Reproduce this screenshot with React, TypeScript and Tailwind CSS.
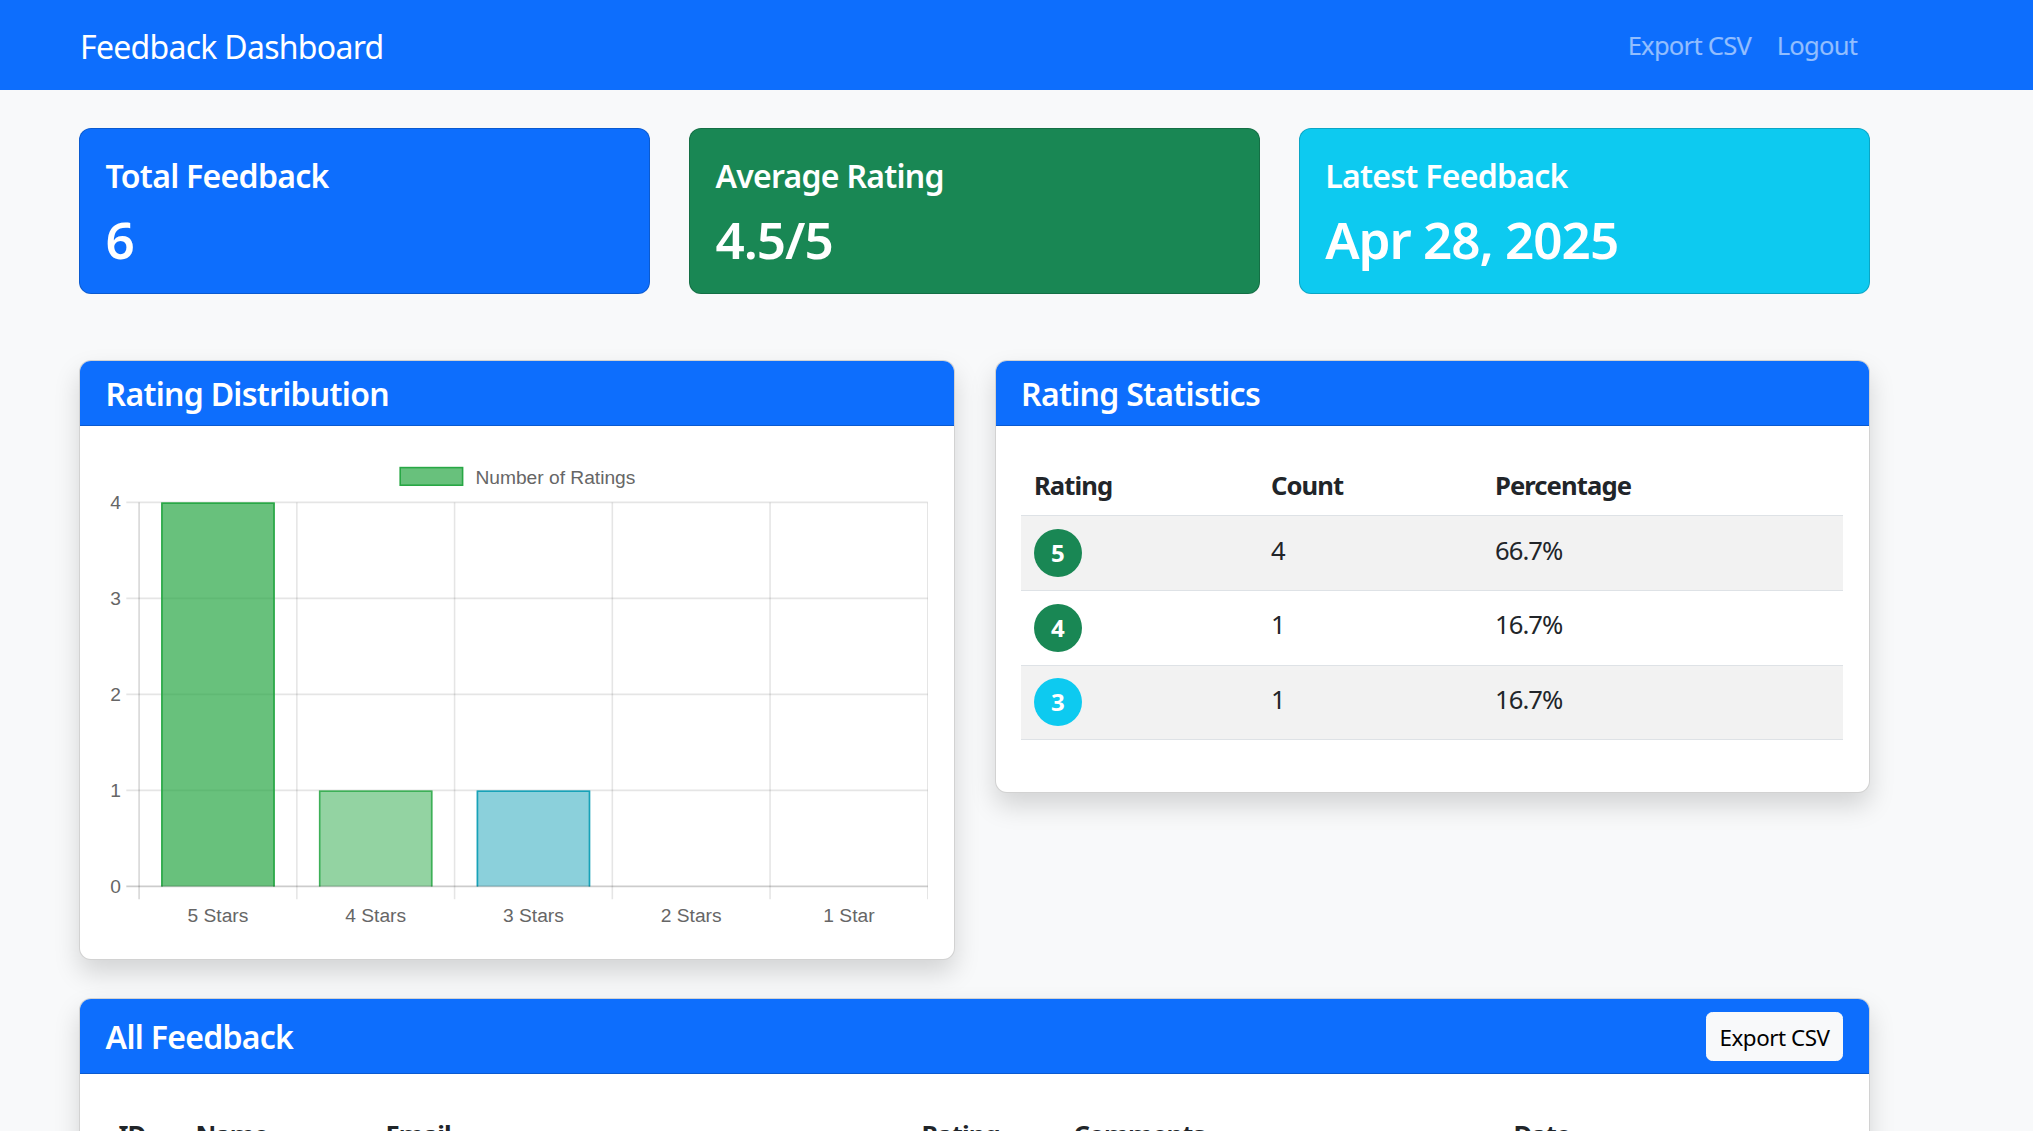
import React from "react";

const FONT = "font-['Noto_Sans','Open_Sans',sans-serif] tracking-[-0.045em]";

function StatCard({ title, value, bg }: { title: string; value: string; bg: string }) {
  return (
    <div className={`rounded-[12px] border border-black/[0.175] ${bg} px-[25.6px] pt-[28px] pb-[23.2px] text-white`}>
      <div className="text-[32px] leading-[38.4px] font-semibold mb-[12.8px]">{title}</div>
      <div className="text-[51.2px] leading-[61.4px] font-semibold tracking-[-0.02em]">{value}</div>
    </div>
  );
}

function CardHeader({ children }: { children: React.ReactNode }) {
  return (
    <div className="bg-[#0d6efd] border-b border-black/[0.175] px-[25.6px] pt-[14px] pb-[11.6px] text-white text-[32px] leading-[38.4px] font-semibold">
      {children}
    </div>
  );
}

const CHART_FONT = "'Liberation Sans', Arial, sans-serif";

function Chart() {
  const x0 = 33.1;
  const right = 821.8;
  const cw = (right - x0) / 5;
  const y = (v: number) => 435.4 - 96 * v;
  const labels = ["5 Stars", "4 Stars", "3 Stars", "2 Stars", "1 Star"];
  const bars = [
    { v: 4, fill: "rgba(40,167,69,0.7)", stroke: "#28a745" },
    { v: 1, fill: "rgba(40,167,69,0.5)", stroke: "rgba(40,167,69,0.8)" },
    { v: 1, fill: "rgba(23,162,184,0.5)", stroke: "#17a2b8" },
  ];
  const bw = cw * 0.72;
  const grid = "rgba(0,0,0,0.1)";
  return (
    <svg width="822" height="482" viewBox="0 0 822 482" className="block tracking-normal">
      <rect x="294.2" y="16.6" width="62.4" height="17.6" fill="rgba(40,167,69,0.7)" stroke="#28a745" strokeWidth="1.6" />
      <text x="369.4" y="26" fontFamily={CHART_FONT} fontSize="19.2" fill="#666" dominantBaseline="central">
        Number of Ratings
      </text>
      {[1, 2, 3, 4].map((v) => (
        <line key={v} x1={x0 - 12.8} x2={right} y1={y(v)} y2={y(v)} stroke={grid} strokeWidth="1.6" />
      ))}
      {[1, 2, 3, 4, 5].map((i) => (
        <line key={i} x1={x0 + cw * i} x2={x0 + cw * i} y1={y(4)} y2={y(0) + 12.8} stroke={grid} strokeWidth="1.6" />
      ))}
      {bars.map((b, i) => {
        const bx = x0 + cw * i + (cw - bw) / 2;
        const top = y(b.v);
        const bottom = y(0);
        return (
          <g key={i}>
            <rect x={bx} y={top} width={bw} height={bottom - top} fill={b.fill} />
            <path
              d={`M ${bx + 0.8} ${bottom} L ${bx + 0.8} ${top + 0.8} L ${bx + bw - 0.8} ${top + 0.8} L ${bx + bw - 0.8} ${bottom}`}
              fill="none"
              stroke={b.stroke}
              strokeWidth="1.6"
            />
          </g>
        );
      })}
      <line x1={x0} x2={x0} y1={y(4)} y2={y(0) + 12.8} stroke="rgba(0,0,0,0.16)" strokeWidth="1.6" />
      <line x1={x0 - 12.8} x2={right} y1={y(0)} y2={y(0)} stroke="rgba(0,0,0,0.2)" strokeWidth="1.6" />
      {[0, 1, 2, 3, 4].map((v) => (
        <text key={v} x="15" y={y(v)} textAnchor="end" dominantBaseline="central" fontFamily={CHART_FONT} fontSize="19.2" fill="#666">
          {v}
        </text>
      ))}
      {labels.map((l, i) => (
        <text
          key={l}
          x={x0 + cw * i + cw / 2}
          y="464"
          textAnchor="middle"
          dominantBaseline="central"
          fontFamily={CHART_FONT}
          fontSize="19.2"
          fill="#666"
        >
          {l}
        </text>
      ))}
    </svg>
  );
}

const statRows = [
  { r: 5, c: 4, p: "66.7%", bg: "bg-[#198754]" },
  { r: 4, c: 1, p: "16.7%", bg: "bg-[#198754]" },
  { r: 3, c: 1, p: "16.7%", bg: "bg-[#0dcaf0]" },
];

const feedback = [
  { id: 6, name: "Sarah Lee", email: "sarah.lee@example.com", rating: 5, comments: "Excellent service, very helpful!", date: "Apr 28, 2025" },
  { id: 5, name: "Michael Chen", email: "michael.chen@example.com", rating: 4, comments: "Good experience overall.", date: "Apr 27, 2025" },
  { id: 4, name: "Emily Davis", email: "emily.davis@example.com", rating: 5, comments: "Loved it, will come again.", date: "Apr 26, 2025" },
  { id: 3, name: "David Kim", email: "david.kim@example.com", rating: 3, comments: "Average, could be better.", date: "Apr 25, 2025" },
  { id: 2, name: "Anna Smith", email: "anna.smith@example.com", rating: 5, comments: "Fantastic support team.", date: "Apr 24, 2025" },
  { id: 1, name: "John Doe", email: "john.doe@example.com", rating: 5, comments: "Great product!", date: "Apr 23, 2025" },
];

const TH = "text-left font-bold px-[12.8px] pt-[16px] pb-[9.6px]";
const TD = "px-[12.8px] pt-[15.5px] pb-[10.1px] align-top";

export default function App() {
  return (
    <div className={`${FONT} min-h-screen bg-[#f8f9fa] text-[#212529]`}>
      <nav className="h-[90px] bg-[#0d6efd] flex items-center">
        <div className="ml-[79px] w-[1791px] flex items-center justify-between pt-[3px]">
          <span className="text-white text-[32px] leading-[48px] pl-[1px]">Feedback Dashboard</span>
          <div className="flex items-center text-[25.6px] leading-[38.4px] text-white/55 tracking-[-0.03em]">
            <span className="px-[12.8px]">Export CSV</span>
            <span className="px-[12.8px]">Logout</span>
          </div>
        </div>
      </nav>

      <main className="ml-[79px] w-[1791px] pt-[38.4px] pb-[60px]">
        <div className="grid grid-cols-3 gap-[38.4px]">
          <StatCard title="Total Feedback" value="6" bg="bg-[#0d6efd]" />
          <StatCard title="Average Rating" value="4.5/5" bg="bg-[#198754]" />
          <StatCard title="Latest Feedback" value="Apr 28, 2025" bg="bg-[#0dcaf0]" />
        </div>

        <div className="mt-[65.6px] grid grid-cols-2 gap-x-[40px] items-start">
          <div className="rounded-[12px] border border-black/[0.175] bg-white overflow-hidden shadow-[0_13px_26px_rgba(0,0,0,0.15)]">
            <CardHeader>Rating Distribution</CardHeader>
            <div className="p-[25.6px]">
              <Chart />
            </div>
          </div>

          <div className="rounded-[12px] border border-black/[0.175] bg-white overflow-hidden shadow-[0_13px_26px_rgba(0,0,0,0.15)]">
            <CardHeader>Rating Statistics</CardHeader>
            <div className="pt-[25.6px] px-[25.6px] pb-[26.5px]">
              <table className="w-full mb-[25.6px] text-[25.6px] leading-[38.4px] border-collapse tracking-[-0.035em]">
                <thead>
                  <tr className="border-b border-[#dee2e6]">
                    <th className={`w-[237px] ${TH}`}>Rating</th>
                    <th className={`w-[224px] ${TH}`}>Count</th>
                    <th className={TH}>Percentage</th>
                  </tr>
                </thead>
                <tbody>
                  {statRows.map((s, i) => (
                    <tr key={s.r} className={`border-b border-[#dee2e6] ${i % 2 === 0 ? "bg-[#f2f2f2]" : "bg-white"}`}>
                      <td className="px-[12.8px] py-[12.8px] align-top">
                        <span className={`${s.bg} w-[48px] h-[48px] rounded-full flex items-center justify-center text-white font-bold text-[24px] leading-none tracking-normal`}>
                          {s.r}
                        </span>
                      </td>
                      <td className={TD}>{s.c}</td>
                      <td className={TD}>{s.p}</td>
                    </tr>
                  ))}
                </tbody>
              </table>
            </div>
          </div>
        </div>

        <div className="mt-[38.4px] rounded-[12px] border border-black/[0.175] bg-white overflow-hidden shadow-[0_13px_26px_rgba(0,0,0,0.15)]">
          <div className="bg-[#0d6efd] border-b border-black/[0.175] px-[25.6px] py-[12.8px] flex items-center justify-between">
            <span className="text-white text-[32px] leading-[38.4px] font-semibold pt-[1px]">All Feedback</span>
            <button className="bg-[#f8f9fa] border border-[#f8f9fa] rounded-[6.4px] px-[12.8px] pt-[7.4px] pb-[5.4px] text-[22.4px] leading-[33.6px] text-black tracking-[-0.02em]">
              Export CSV
            </button>
          </div>
          <div className="p-[25.6px]">
            <table className="w-full text-[25.6px] leading-[38.4px] border-collapse tracking-[-0.035em]">
              <thead>
                <tr className="border-b border-[#dee2e6]">
                  <th className={`w-[77px] ${TH}`}>ID</th>
                  <th className={`w-[190px] ${TH}`}>Name</th>
                  <th className={`w-[536px] ${TH}`}>Email</th>
                  <th className={`w-[152px] ${TH}`}>Rating</th>
                  <th className={`w-[440px] ${TH}`}>Comments</th>
                  <th className={TH}>Date</th>
                </tr>
              </thead>
              <tbody>
                {feedback.map((f, i) => (
                  <tr key={f.id} className={`border-b border-[#dee2e6] ${i % 2 === 0 ? "bg-[#f2f2f2]" : "bg-white"}`}>
                    <td className={TD}>{f.id}</td>
                    <td className={TD}>{f.name}</td>
                    <td className={TD}>{f.email}</td>
                    <td className={TD}>{f.rating}</td>
                    <td className={TD}>{f.comments}</td>
                    <td className={TD}>{f.date}</td>
                  </tr>
                ))}
              </tbody>
            </table>
          </div>
        </div>
      </main>
    </div>
  );
}
